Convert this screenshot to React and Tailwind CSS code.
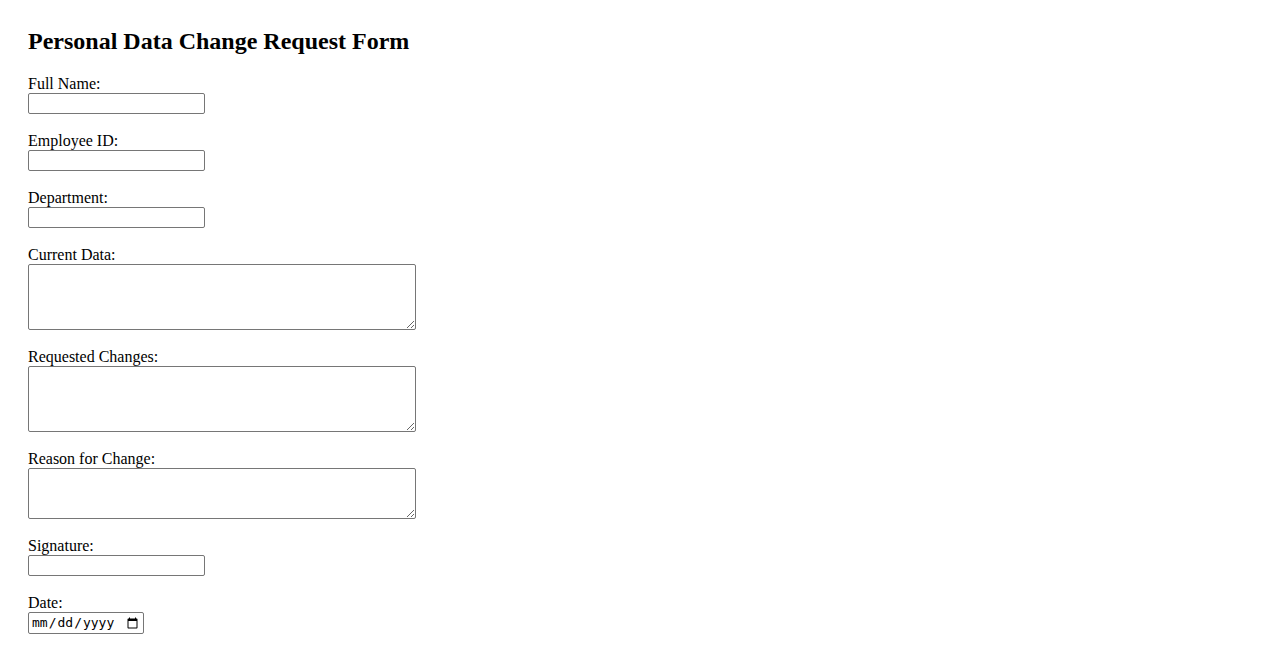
import React from 'react';

const inputCls =
  'block w-[177px] h-[21px] border border-[#767676] rounded-[2px] px-[2px] py-[1px] bg-white text-[13.33px] font-["Liberation_Sans",sans-serif]';

const areaCls =
  'block w-[388px] border border-[#767676] rounded-[2px] p-[2px] bg-white text-[13.33px] font-["Liberation_Mono",monospace] resize';

const Field = ({ label, children }) => (
  <div className="mb-[18px]">
    <label className="block h-[18px] leading-[18px]">{label}</label>
    {children}
  </div>
);

const App = () => {
  return (
    <div className="min-h-screen bg-white text-black font-['Liberation_Serif',serif] text-[16px] px-[28px] pt-[27px]">
      <h2 className="text-[24px] font-bold leading-[28px] mb-[20px]">Personal Data Change Request Form</h2>
      <form>
        <Field label="Full Name:">
          <input type="text" className={inputCls} />
        </Field>
        <Field label="Employee ID:">
          <input type="text" className={inputCls} />
        </Field>
        <Field label="Department:">
          <input type="text" className={inputCls} />
        </Field>
        <Field label="Current Data:">
          <textarea className={`${areaCls} h-[66px]`} />
        </Field>
        <Field label="Requested Changes:">
          <textarea className={`${areaCls} h-[66px]`} />
        </Field>
        <Field label="Reason for Change:">
          <textarea className={`${areaCls} h-[51px]`} />
        </Field>
        <Field label="Signature:">
          <input type="text" className={inputCls} />
        </Field>
        <Field label="Date:">
          <input
            type="date"
            className='block w-[116px] h-[22px] border border-[#767676] rounded-[2px] px-[2px] bg-white text-[13px] font-["DejaVu_Sans_Mono",monospace]'
          />
        </Field>
      </form>
    </div>
  );
};

export default App;
